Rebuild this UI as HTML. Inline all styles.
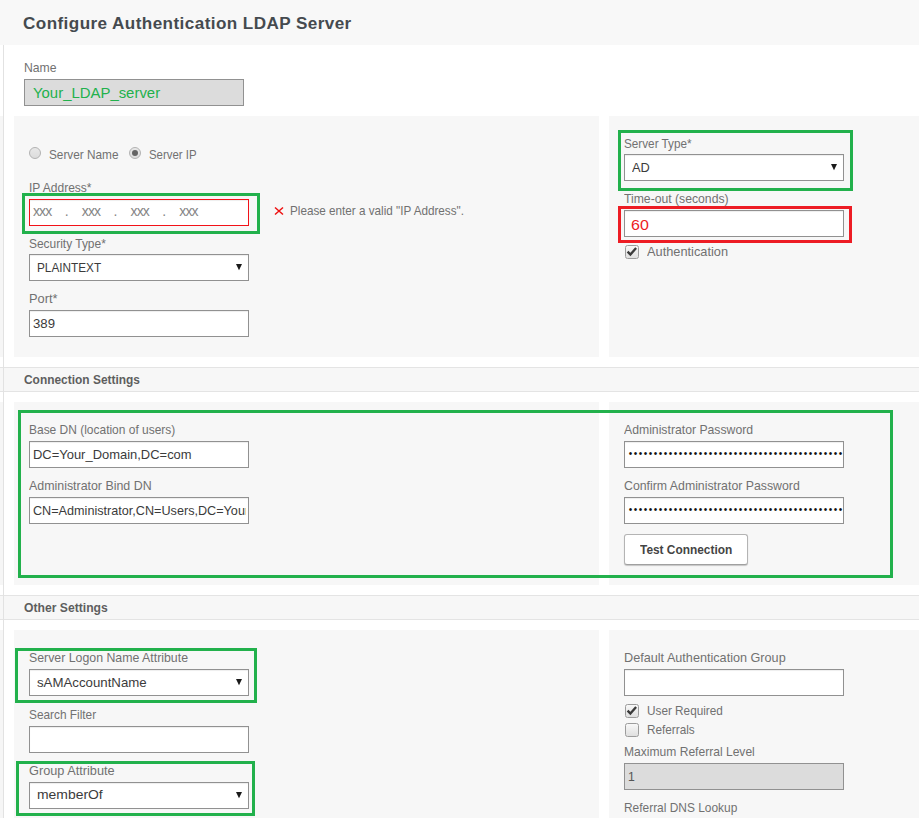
<!DOCTYPE html>
<html>
<head>
<meta charset="utf-8">
<title>Configure Authentication LDAP Server</title>
<style>
html,body{margin:0;padding:0;}
body{width:919px;height:818px;position:relative;overflow:hidden;background:#fff;font-family:"Liberation Sans",sans-serif;font-size:13px;color:#555;}
.abs{position:absolute;box-sizing:border-box;}
.hdr{left:0;top:0;width:919px;height:44.6px;background:#f8f8f8;}
.strip{left:0;width:3px;background:#f6f6f6;}
.stripline{left:3px;top:45px;width:1px;height:773px;background:#e2e2e2;}
.title{left:23px;top:12.5px;font-size:16px;font-weight:bold;color:#454a4f;white-space:nowrap;line-height:22px;transform-origin:0 0;letter-spacing:.4px;transform:scaleX(1.068);}
.panel{background:#f7f7f7;}
.lbl{white-space:nowrap;line-height:14px;font-size:13px;color:#717171;transform-origin:0 0;}
.it{white-space:nowrap;transform-origin:0 0;}
.lbl.b{font-weight:bold;color:#5e5e5e;}
.lbl.bt{color:#444;}
.inp{background:#fff;border:1px solid #919191;height:27px;width:220px;box-shadow:inset 0 1px 1px rgba(0,0,0,.07);font-size:13px;color:#333;line-height:25px;padding-left:4px;white-space:nowrap;overflow:hidden;}
.sel{padding-left:8px;}
.arrow{position:absolute;right:6px;top:9px;width:6px;height:7px;}
.dis{background:#dcdcdc;box-shadow:none;}
.gbox{border:3px solid #22b14c;}
.rbox{border:3px solid #ed1c24;}
.band{left:0;width:919px;height:25px;background:#f7f7f7;border-top:1px solid #e4e4e4;border-bottom:1px solid #e4e4e4;}
.radio{width:12px;height:12px;border-radius:50%;border:1px solid #b2b2b2;background:linear-gradient(#e8e8e8,#dcdcdc);}
.cb{width:14px;height:14px;border-radius:2.5px;border:1px solid #9c9c9c;background:linear-gradient(#f8f8f8,#dfdfdf);}
.btn{background:#fff;border:1px solid #b4b4b4;border-bottom-color:#a0a0a0;border-radius:3px;box-shadow:0 1px 1px rgba(0,0,0,.2);}
.ip span{display:inline-block;text-align:center;}
.ip .x{width:18.6px;letter-spacing:-.9px;text-align:left !important;}
.ip .d{width:30.2px;}
.pw{font-size:10px;color:#111;padding-left:3.7px;letter-spacing:1.5px;line-height:24px;}
</style>
</head>
<body>
<div class="abs hdr"></div>
<div class="abs strip" style="top:116px;height:241px;"></div>
<div class="abs strip" style="top:402px;height:183px;"></div>
<div class="abs strip" style="top:630px;height:188px;"></div>
<div class="abs band" style="top:367px;"></div>
<div class="abs band" style="top:595px;"></div>
<div class="abs stripline"></div>
<div class="abs title">Configure Authentication LDAP Server</div>

<div class="abs inp dis" style="left:24px;top:79px;color:#22b14c;font-size:15px;padding-left:8px;letter-spacing:-.1px;"></div>

<!-- panel 1 -->
<div class="abs panel" style="left:14px;top:116px;width:585px;height:241px;"></div>
<div class="abs panel" style="left:609px;top:116px;width:310px;height:241px;"></div>

<div class="abs radio" style="left:29px;top:147px;"></div>
<div class="abs radio" style="left:129px;top:147px;"><div class="abs" style="left:2px;top:2px;width:6px;height:6px;border-radius:50%;background:#646464;"></div></div>

<div class="abs gbox" style="left:22px;top:193px;width:238px;height:41px;"></div>
<div class="abs inp ip" style="left:29px;top:199px;border-color:#f21218;color:#858585;padding-left:3px;line-height:22px;font-size:14px;"><span class="x">xxx</span><span class="d">.</span><span class="x">xxx</span><span class="d">.</span><span class="x">xxx</span><span class="d">.</span><span class="x">xxx</span></div>
<svg class="abs" style="left:274px;top:206px;" width="10" height="10" viewBox="0 0 10 10"><path d="M1 1.5L9 8.5M9 1.5L1 8.5" stroke="#ee1111" stroke-width="1.5" fill="none"/></svg>

<div class="abs inp sel" style="left:29px;top:254px;"><svg class="arrow" viewBox="0 0 6 7"><polygon points="0,0 6,0 3,6.2" fill="#1a1a1a"/></svg></div>
<div class="abs inp" style="left:29px;top:310px;"></div>

<div class="abs gbox" style="left:618px;top:130px;width:235px;height:61px;"></div>
<div class="abs inp sel" style="left:624px;top:154px;"><svg class="arrow" viewBox="0 0 6 7"><polygon points="0,0 6,0 3,6.2" fill="#1a1a1a"/></svg></div>
<div class="abs rbox" style="left:618px;top:206px;width:234px;height:37px;"></div>
<div class="abs inp" style="left:624px;top:210px;color:#ed1c24;font-size:15px;padding-left:7px;"></div>
<div class="abs cb" style="left:625px;top:245px;"><svg width="14" height="14" viewBox="0 0 14 14" style="position:absolute;left:-1px;top:-1px"><path d="M2.6 6.6L5.4 9.6L11.1 3" stroke="#3a3a3a" stroke-width="2.3" fill="none"/></svg></div>

<!-- Connection settings -->
<div class="abs panel" style="left:14px;top:402px;width:585px;height:183px;"></div>
<div class="abs panel" style="left:609px;top:402px;width:310px;height:183px;"></div>
<div class="abs gbox" style="left:18px;top:410px;width:875px;height:168px;"></div>

<div class="abs inp" style="left:29px;top:441px;"></div>
<div class="abs inp" style="left:29px;top:497px;"></div>

<div class="abs inp pw" style="left:624px;top:441px;">••••••••••••••••••••••••••••••••••••••••••••••••••••••••••••••••</div>
<div class="abs inp pw" style="left:624px;top:497px;">••••••••••••••••••••••••••••••••••••••••••••••••••••••••••••••••</div>
<div class="abs btn" style="left:624px;top:534px;width:124px;height:31px;"></div>

<!-- Other settings -->
<div class="abs panel" style="left:14px;top:630px;width:585px;height:188px;"></div>
<div class="abs panel" style="left:609px;top:630px;width:310px;height:188px;"></div>

<div class="abs gbox" style="left:15px;top:648px;width:242px;height:55px;"></div>
<div class="abs inp sel" style="left:29px;top:669px;"><svg class="arrow" viewBox="0 0 6 7"><polygon points="0,0 6,0 3,6.2" fill="#1a1a1a"/></svg></div>
<div class="abs inp" style="left:29px;top:726px;"></div>
<div class="abs gbox" style="left:16px;top:761px;width:239px;height:55px;"></div>
<div class="abs inp sel" style="left:29px;top:782px;"><svg class="arrow" viewBox="0 0 6 7"><polygon points="0,0 6,0 3,6.2" fill="#1a1a1a"/></svg></div>

<div class="abs inp" style="left:624px;top:669px;"></div>
<div class="abs cb" style="left:625px;top:704px;"><svg width="14" height="14" viewBox="0 0 14 14" style="position:absolute;left:-1px;top:-1px"><path d="M2.6 6.6L5.4 9.6L11.1 3" stroke="#3a3a3a" stroke-width="2.3" fill="none"/></svg></div>
<div class="abs cb" style="left:625px;top:723px;"></div>
<div class="abs inp dis" style="left:624px;top:763px;"></div>
<div class="abs lbl " style="left:24.2px;top:60.5px;transform:scaleX(0.9384);">Name</div>
<div class="abs lbl " style="left:49.0px;top:147.5px;transform:scaleX(0.9076);">Server Name</div>
<div class="abs lbl " style="left:148.9px;top:147.5px;transform:scaleX(0.8784);">Server IP</div>
<div class="abs lbl " style="left:29.2px;top:180.5px;transform:scaleX(0.9239);">IP Address*</div>
<div class="abs lbl " style="left:290.0px;top:203.5px;transform:scaleX(0.9002);">Please enter a valid &quot;IP Address&quot;.</div>
<div class="abs lbl " style="left:29.0px;top:236.5px;transform:scaleX(0.9187);">Security Type*</div>
<div class="abs lbl " style="left:29.0px;top:291.5px;transform:scaleX(0.9859);">Port*</div>
<div class="abs lbl " style="left:623.9px;top:136.5px;transform:scaleX(0.9023);">Server Type*</div>
<div class="abs lbl " style="left:623.9px;top:191.5px;transform:scaleX(0.9381);">Time-out (seconds)</div>
<div class="abs lbl " style="left:647.0px;top:244.5px;transform:scaleX(0.9829);">Authentication</div>
<div class="abs lbl " style="left:28.9px;top:422.5px;transform:scaleX(0.9204);">Base DN (location of users)</div>
<div class="abs lbl " style="left:28.9px;top:478.5px;transform:scaleX(0.9533);">Administrator Bind DN</div>
<div class="abs lbl " style="left:624.0px;top:422.5px;transform:scaleX(0.9404);">Administrator Password</div>
<div class="abs lbl " style="left:624.0px;top:478.5px;transform:scaleX(0.9468);">Confirm Administrator Password</div>
<div class="abs lbl " style="left:28.9px;top:650.5px;transform:scaleX(0.9484);">Server Logon Name Attribute</div>
<div class="abs lbl " style="left:28.9px;top:707.5px;transform:scaleX(0.9104);">Search Filter</div>
<div class="abs lbl " style="left:28.9px;top:763.5px;transform:scaleX(0.9788);">Group Attribute</div>
<div class="abs lbl " style="left:624.2px;top:650.5px;transform:scaleX(0.9727);">Default Authentication Group</div>
<div class="abs lbl " style="left:647.1px;top:704.0px;transform:scaleX(0.9054);">User Required</div>
<div class="abs lbl " style="left:647.1px;top:723.0px;transform:scaleX(0.9043);">Referrals</div>
<div class="abs lbl " style="left:624.2px;top:744.5px;transform:scaleX(0.9285);">Maximum Referral Level</div>
<div class="abs lbl " style="left:624.2px;top:800.5px;transform:scaleX(0.9169);">Referral DNS Lookup</div>
<div class="abs lbl b" style="left:24.0px;top:372.5px;transform:scaleX(0.9178);">Connection Settings</div>
<div class="abs lbl b" style="left:23.9px;top:600.5px;transform:scaleX(0.9355);">Other Settings</div>
<div class="abs lbl b bt" style="left:639.8px;top:542.5px;transform:scaleX(0.9140);">Test Connection</div>
<div class="abs it" style="left:32.8px;top:84.3px;font-size:15px;line-height:17px;color:#22b14c;transform:scaleX(0.9941);">Your_LDAP_server</div>
<div class="abs it" style="left:37.2px;top:260.0px;font-size:13px;line-height:15px;color:#3b3b3b;transform:scaleX(0.9054);">PLAINTEXT</div>
<div class="abs it" style="left:32.8px;top:316.0px;font-size:13px;line-height:15px;color:#3b3b3b;transform:scaleX(1.0137);">389</div>
<div class="abs it" style="left:632.1px;top:160.0px;font-size:13px;line-height:15px;color:#3b3b3b;transform:scaleX(0.9855);">AD</div>
<div class="abs it" style="left:631.3px;top:215.9px;font-size:15px;line-height:17px;color:#ed1c24;transform:scaleX(1.0667);">60</div>
<div class="abs it" style="left:33.3px;top:447.0px;font-size:13px;line-height:15px;color:#3b3b3b;transform:scaleX(0.9962);">DC=Your_Domain,DC=com</div>
<div class="abs" style="left:0;top:0;width:245.5px;height:818px;overflow:hidden;"><div class="abs it" style="left:33.3px;top:503.0px;font-size:13px;line-height:15px;color:#3b3b3b;transform:scaleX(0.9717);">CN=Administrator,CN=Users,DC=Your_Domain</div></div>
<div class="abs it" style="left:36.8px;top:675.0px;font-size:13px;line-height:15px;color:#3b3b3b;transform:scaleX(1.0190);">sAMAccountName</div>
<div class="abs it" style="left:36.8px;top:787.3px;font-size:13px;line-height:15px;color:#3b3b3b;transform:scaleX(1.0699);">memberOf</div>
<div class="abs it" style="left:627.7px;top:769.3px;font-size:13px;line-height:15px;color:#555;transform:scaleX(0.9400);">1</div>
</body>
</html>
